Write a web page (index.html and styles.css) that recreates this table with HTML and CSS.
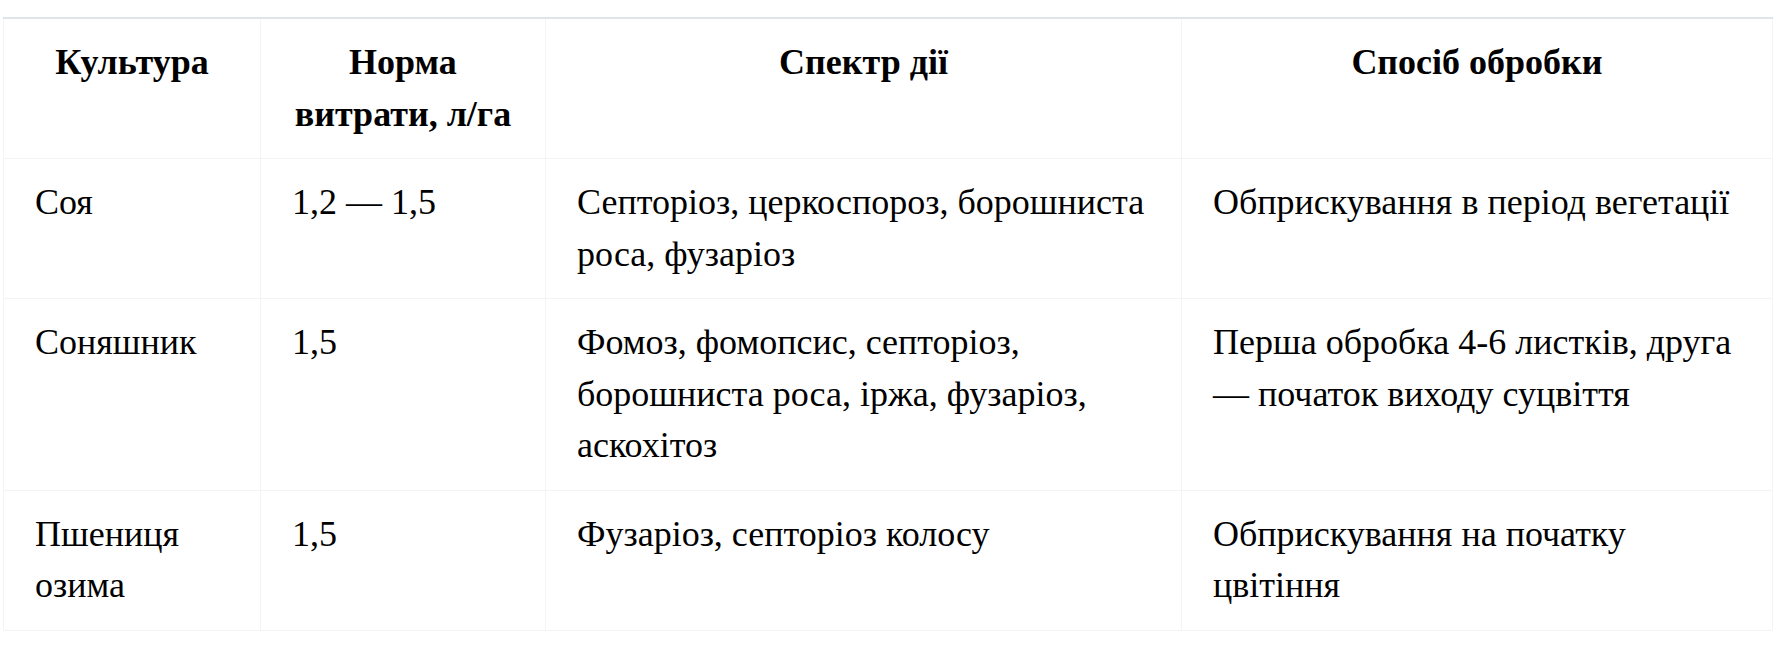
FILE: index.html
```html
<!DOCTYPE html>
<html lang="uk">
<head>
<meta charset="utf-8">
<title>Таблиця</title>
<link rel="stylesheet" href="styles.css">
</head>
<body>
<div class="wrap">
  <div class="grid" role="table">
    <div class="cell head first" role="columnheader">Культура</div>
    <div class="cell head" role="columnheader">Норма витрати, л/га</div>
    <div class="cell head" role="columnheader">Спектр дії</div>
    <div class="cell head" role="columnheader">Спосіб обробки</div>

    <div class="cell first" role="cell">Соя</div>
    <div class="cell" role="cell">1,2 — 1,5</div>
    <div class="cell" role="cell">Септоріоз, церкоспороз, борошниста роса, фузаріоз</div>
    <div class="cell" role="cell">Обприскування в період вегетації</div>

    <div class="cell first" role="cell">Соняшник</div>
    <div class="cell" role="cell">1,5</div>
    <div class="cell" role="cell">Фомоз, фомопсис, септоріоз, борошниста роса, іржа, фузаріоз, аскохітоз</div>
    <div class="cell" role="cell">Перша обробка 4-6 листків, друга — початок виходу суцвіття</div>

    <div class="cell first" role="cell">Пшениця озима</div>
    <div class="cell" role="cell">1,5</div>
    <div class="cell" role="cell">Фузаріоз, септоріоз колосу</div>
    <div class="cell" role="cell">Обприскування на початку цвітіння</div>
  </div>
</div>
</body>
</html>
```
FILE: styles.css
```css
html, body {
  margin: 0;
  padding: 0;
  background: #ffffff;
}
.wrap {
  padding: 17px 0 0 3px;
}
.grid {
  display: grid;
  grid-template-columns: 258px 285px 636px 591px;
  width: 1770px;
  border-top: 2px solid #dfe4e8;
  font-family: "Liberation Serif", "Times New Roman", serif;
  font-size: 36px;
  line-height: 51.5px;
  color: #000000;
}
.cell {
  padding: 18px 31px;
  border-right: 1px solid #f4f4f4;
  border-bottom: 1px solid #f4f4f4;
  text-align: left;
}
.first {
  border-left: 1px solid #f4f4f4;
}
.head {
  font-weight: bold;
  text-align: center;
}
```
